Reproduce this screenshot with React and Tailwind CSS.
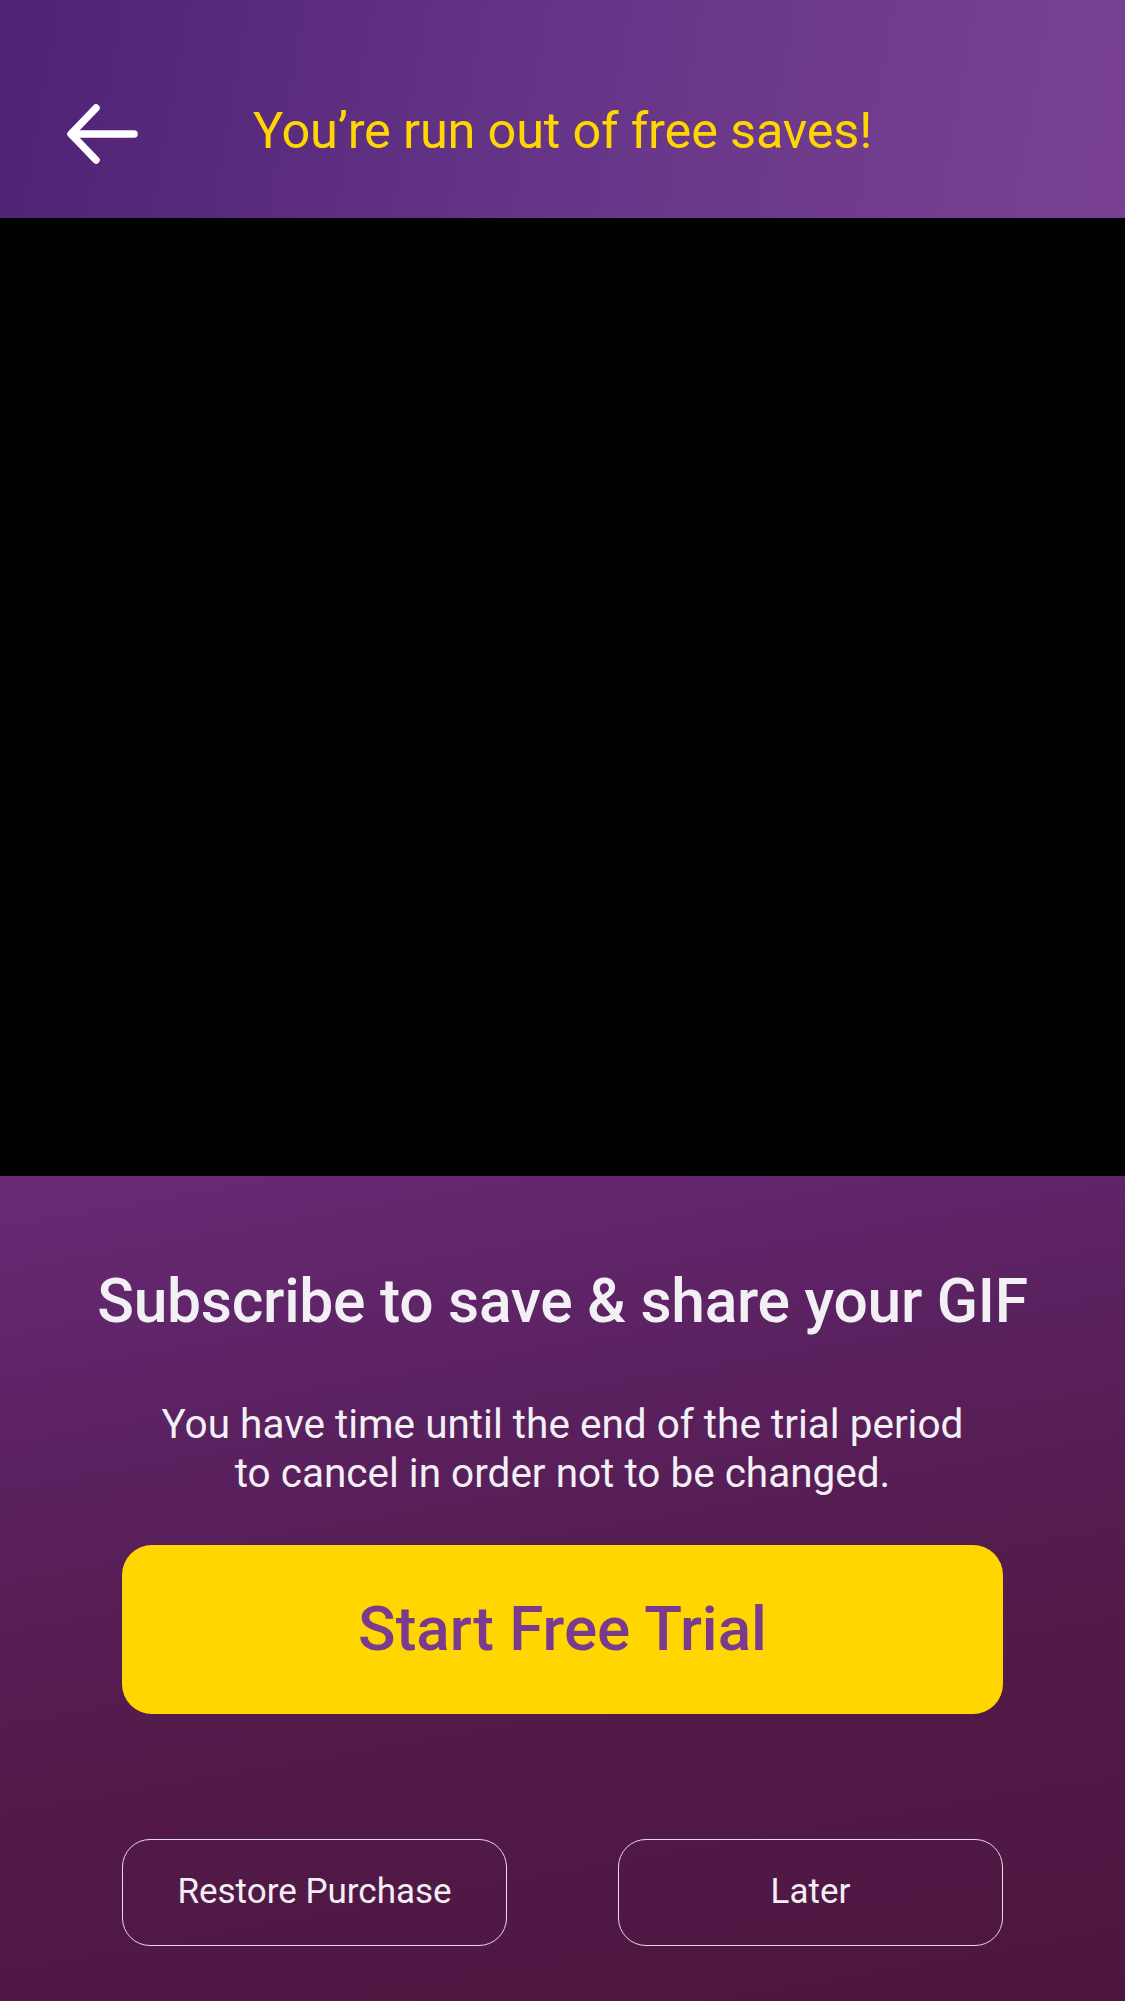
import React from "react";

export default function App() {
  return (
    <div className="w-[1125px] h-[2001px] flex flex-col overflow-hidden" style={{ fontFamily: "Roboto, 'Liberation Sans', sans-serif" }}>
      <header className="relative h-[218px] shrink-0 flex items-center justify-center bg-[linear-gradient(100deg,#4e2275_0%,#663587_50%,#7a4192_100%)]">
        <button className="absolute left-[66px] top-[102px] w-[74px] h-[64px] flex items-center justify-center">
          <svg width="74" height="64" viewBox="0 0 74 64" fill="none" stroke="#ffffff" strokeWidth="7.5" strokeLinecap="round" strokeLinejoin="round">
            <path d="M68 32 H6" />
            <path d="M30 6 L5 32 L30 58" />
          </svg>
        </button>
        <h1 className="text-[#ffd600] text-[50.5px] font-normal leading-none mt-[44px] tracking-[-0.2px]">You’re run out of free saves!</h1>
      </header>
      <div className="h-[958px] shrink-0 bg-black" />
      <section className="flex-1 flex flex-col items-center bg-[linear-gradient(170deg,#692a75_0%,#5a2160_30%,#531a4a_60%,#4d163f_100%)]">
        <h2 className="mt-[96px] text-[#f2f0f4] text-[60.6px] font-medium leading-none tracking-[-0.3px]">Subscribe to save &amp; share your GIF</h2>
        <p className="mt-[67px] text-[#f2f0f4] text-[40.5px] leading-[49px] text-center font-normal">
          You have time until the end of the trial period
          <br />
          to cancel in order not to be changed.
        </p>
        <button className="mt-[47px] w-[881px] h-[169px] rounded-[30px] bg-[#ffd600] flex items-center justify-center">
          <span className="text-[#7a3a8e] text-[62px] font-medium leading-none">Start Free Trial</span>
        </button>
        <div className="mt-[125px] w-[881px] flex justify-between">
          <button className="w-[385px] h-[107px] rounded-[28px] border-[1.5px] border-[#e8dbe6] flex items-center justify-center text-[#f4eef4] text-[35px] font-normal">
            Restore Purchase
          </button>
          <button className="w-[385px] h-[107px] rounded-[28px] border-[1.5px] border-[#e8dbe6] flex items-center justify-center text-[#f4eef4] text-[35px] font-normal">
            Later
          </button>
        </div>
      </section>
    </div>
  );
}
